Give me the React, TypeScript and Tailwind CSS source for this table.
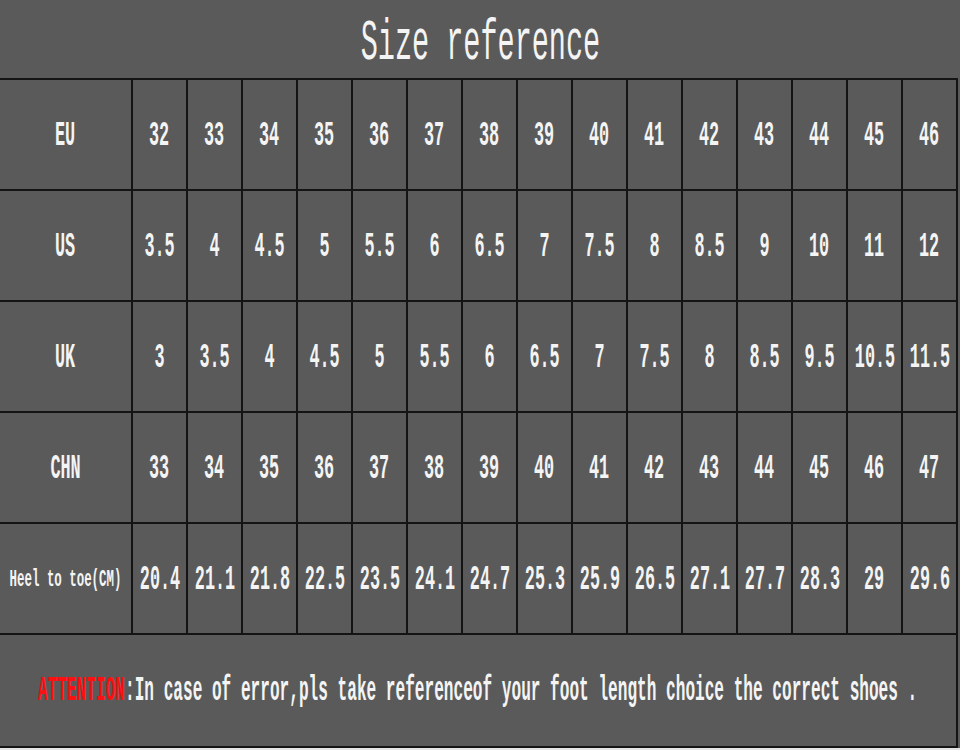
import React from "react";

const rows: { label: string; values: string[]; small?: boolean }[] = [
  {
    label: "EU",
    values: ["32", "33", "34", "35", "36", "37", "38", "39", "40", "41", "42", "43", "44", "45", "46"],
  },
  {
    label: "US",
    values: ["3.5", "4", "4.5", "5", "5.5", "6", "6.5", "7", "7.5", "8", "8.5", "9", "10", "11", "12"],
  },
  {
    label: "UK",
    values: ["3", "3.5", "4", "4.5", "5", "5.5", "6", "6.5", "7", "7.5", "8", "8.5", "9.5", "10.5", "11.5"],
  },
  {
    label: "CHN",
    values: ["33", "34", "35", "36", "37", "38", "39", "40", "41", "42", "43", "44", "45", "46", "47"],
  },
  {
    label: "Heel to toe(CM)",
    small: true,
    values: ["20.4", "21.1", "21.8", "22.5", "23.5", "24.1", "24.7", "25.3", "25.9", "26.5", "27.1", "27.7", "28.3", "29", "29.6"],
  },
];

const mono = "font-['Liberation_Mono',monospace]";

// the picture uses a tall, narrow half-width font; squeeze a mono face to match
const Narrow = ({ children, className = "" }: { children: React.ReactNode; className?: string }) => (
  <span className={`inline-block whitespace-nowrap leading-none ${mono} ${className}`}>{children}</span>
);

const Cell = ({ children }: { children: React.ReactNode }) => (
  <div className="flex h-[111px] items-center justify-center border-r-2 border-b-2 border-[#141414] pt-[3px]">
    {children}
  </div>
);

export default function App() {
  return (
    <div className="h-[750px] w-[960px] overflow-hidden bg-[#e4e4e4]">
      <div className="h-[748px] bg-[#5a5a5a] text-[#f4f4f4]">
        <div className="flex h-[78px] items-center justify-center pt-[10px]">
          <Narrow className="scale-x-[0.5] text-[57px]">Size reference</Narrow>
        </div>
        <div className="w-[958px] border-t-2 border-[#141414]">
          <div className="grid grid-cols-[133px_repeat(15,55px)]">
            {rows.map((row) => (
              <React.Fragment key={row.label}>
                <Cell>
                  <Narrow
                    className={
                      row.small
                        ? "scale-x-[0.54] text-[23px] font-bold"
                        : "scale-x-[0.48] text-[35px] font-bold"
                    }
                  >
                    {row.label}
                  </Narrow>
                </Cell>
                {row.values.map((v, i) => (
                  <Cell key={i}>
                    <Narrow className="scale-x-[0.48] text-[35px] font-bold">{v}</Narrow>
                  </Cell>
                ))}
              </React.Fragment>
            ))}
          </div>
          <div className="flex h-[113px] items-center justify-center border-r-2 border-b-2 border-[#141414] pt-[2px]">
            <Narrow className="scale-x-[0.46] text-[35px] font-bold">
              <span className="text-[#ff1010]">ATTENTION</span>:In case of error,pls take referenceof your foot
              length choice the correct shoes .
            </Narrow>
          </div>
        </div>
      </div>
    </div>
  );
}
